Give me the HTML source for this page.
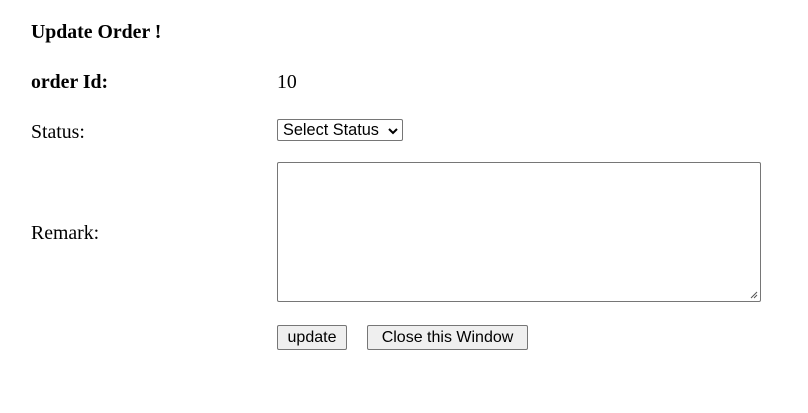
<!DOCTYPE html>
<html><head><style>
body{margin:0;width:808px;height:413px;background:#fff;font-family:"Liberation Serif",serif;font-size:19.8px;color:#000;position:relative;overflow:hidden}
.t{position:absolute;line-height:20px}
b{font-weight:bold}
.sel{position:absolute;left:277px;top:119px;width:126px;height:22px;border:1px solid #767676;border-radius:2px;box-sizing:border-box;font-family:"Liberation Sans",sans-serif;font-size:16.3px;line-height:20px;padding-left:5px;background:#fff}
.sel svg{position:absolute;right:4px;top:7px}
.ta{position:absolute;left:277px;top:162px;width:484px;height:140px;border:1px solid #767676;box-sizing:border-box;border-radius:2px}
.btn{position:absolute;top:325px;height:25px;border:1px solid #767676;border-radius:2px;background:#efefef;box-sizing:border-box;font-family:"Liberation Sans",sans-serif;font-size:16px;line-height:23px;text-align:center}
</style></head><body>
<div class="t" style="left:31px;top:22px"><b>Update Order !</b></div>
<div class="t" style="left:31px;top:72px"><b>order Id:</b></div>
<div class="t" style="left:277px;top:72px">10</div>
<div class="t" style="left:31px;top:122px">Status:</div>
<div class="sel">Select Status<svg width="10" height="8" viewBox="0 0 10 8"><path d="M1 2 L5 6 L9 2" stroke="#000" stroke-width="2" fill="none"/></svg></div>
<div class="t" style="left:31px;top:223px">Remark:</div>
<div class="ta"><svg style="position:absolute;right:2px;bottom:2px" width="8" height="8"><path d="M7 1 L1 7 M7 4 L4 7" stroke="#555" stroke-width="1"/></svg></div>
<div class="btn" style="left:277px;width:70px">update</div>
<div class="btn" style="left:367px;width:161px">Close this Window</div>
</body></html>
